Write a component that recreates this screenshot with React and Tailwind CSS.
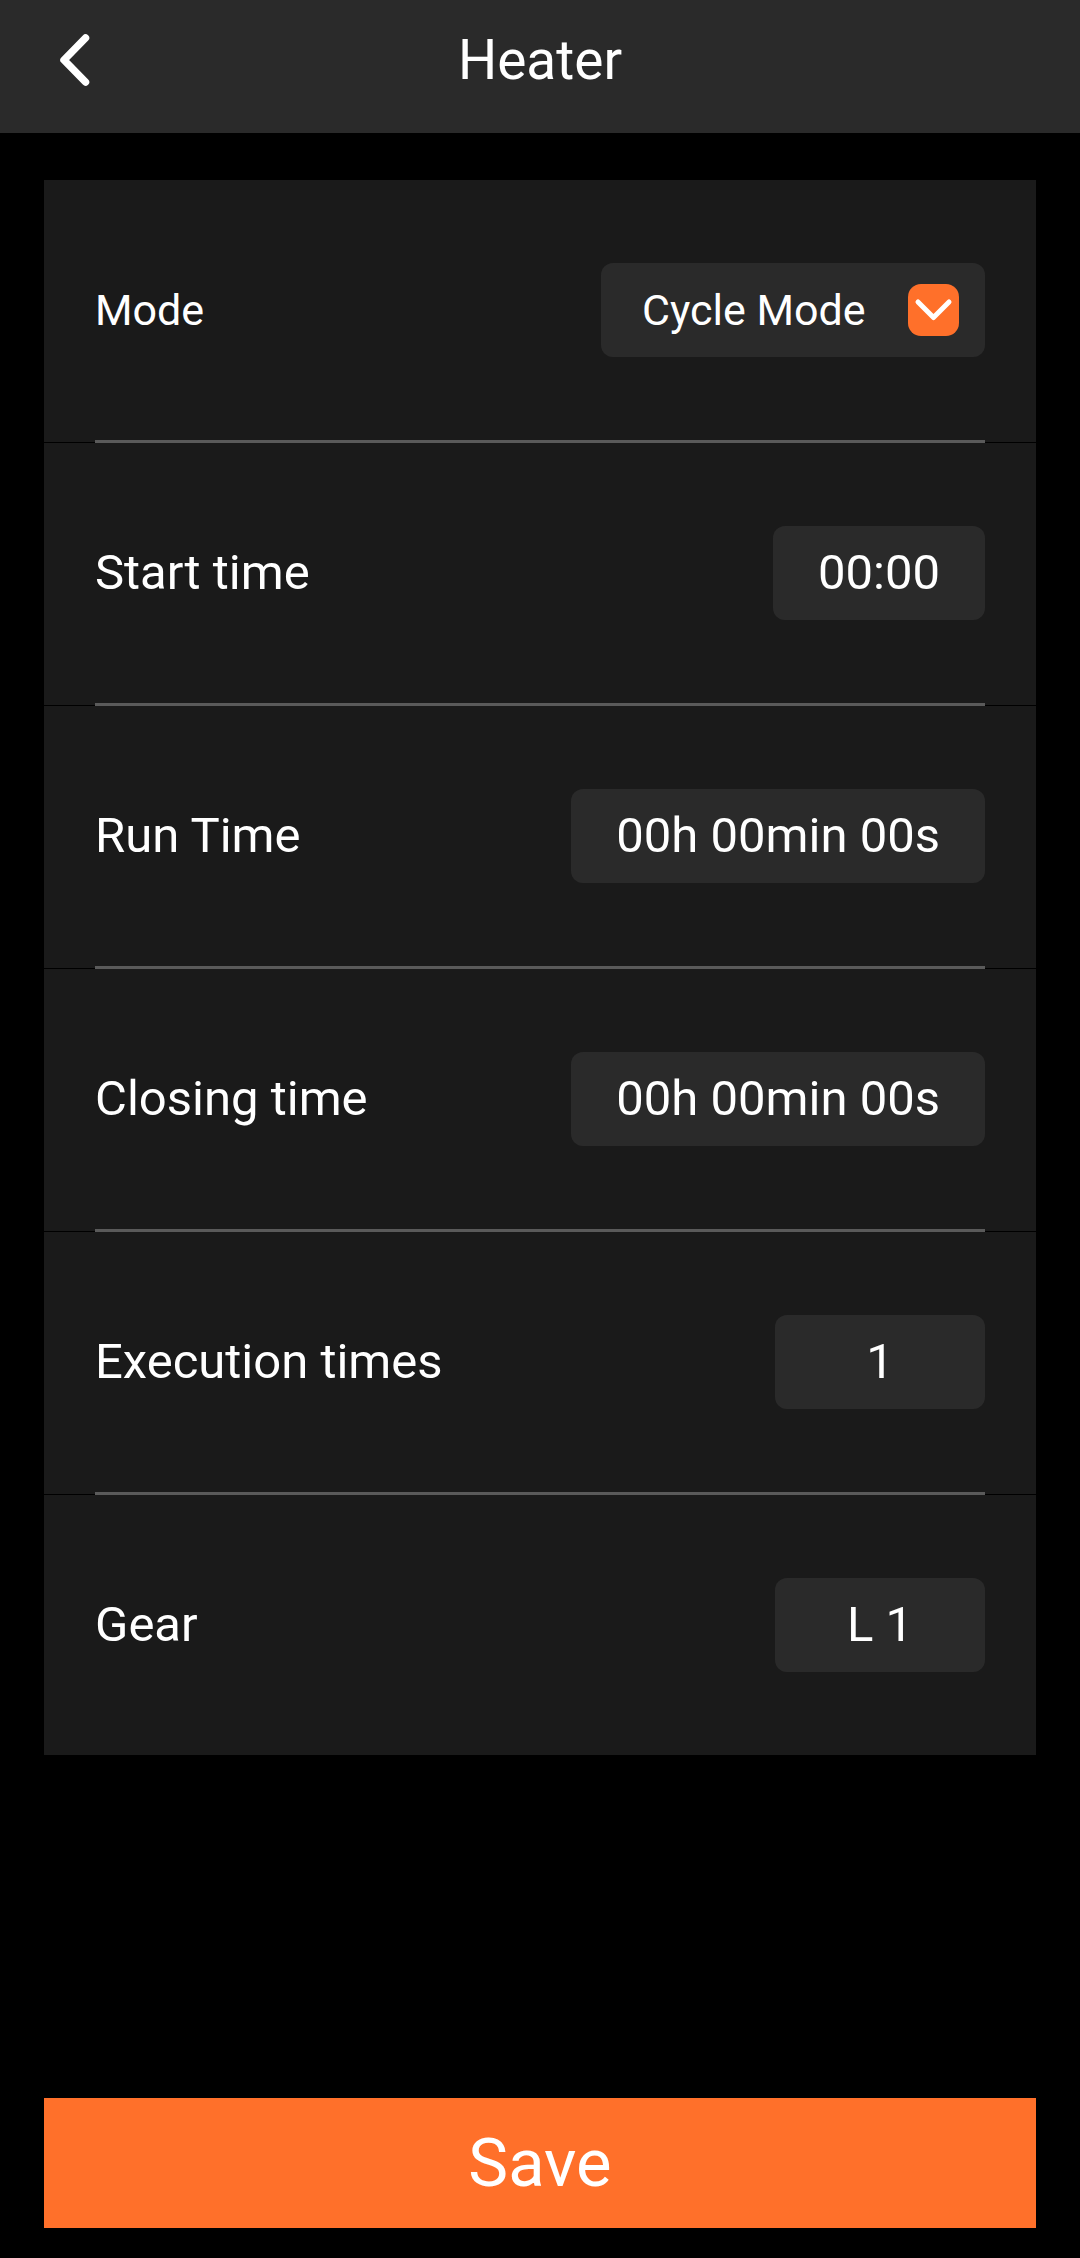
import React, { useState } from 'react';

const ROWS = [
    { id: 'start', label: 'Start time', value: '00:00' },
    { id: 'run', label: 'Run Time', value: '00h 00min 00s' },
    { id: 'closing', label: 'Closing time', value: '00h 00min 00s' },
    { id: 'times', label: 'Execution times', value: '1' },
    { id: 'gear', label: 'Gear', value: 'L 1' },
];

function Header({ title }) {
    return (
        <header className="grid grid-cols-[1fr_auto_1fr] items-center h-[133px] px-10 pb-[13px] bg-[#2a2a2a]">
            <button type="button" aria-label="Back" className="justify-self-start w-[70px] h-[70px] flex items-center justify-center">
                <svg width="50" height="60" viewBox="0 0 50 60" fill="none" stroke="currentColor" strokeWidth="7.5" strokeLinecap="round" strokeLinejoin="round">
                    <path d="M35.5 8 14 30l21.5 22" />
                </svg>
            </button>
            <h1 className="text-[55px] leading-[64px]">{title}</h1>
        </header>
    );
}

function Divider() {
    return (
        <div className="h-[3px] px-[51px] border-b border-black" aria-hidden="true">
            <div className="h-[3px] bg-[#5a5a5a]" />
        </div>
    );
}

function Row({ children }) {
    return (
        <div className="h-[260px] px-[51px] flex items-center justify-between gap-6">
            {children}
        </div>
    );
}

function ModeSelect({ id, value, onChange }) {
    return (
        <div className="relative">
            <select
                id={id}
                value={value}
                onChange={(e) => onChange(e.target.value)}
                className="appearance-none h-[94px] pl-[41px] pr-[119px] rounded-[12px] bg-[#2a2a2a] text-[43px] cursor-pointer outline-none"
            >
                <option value="cycle">Cycle Mode</option>
            </select>
            <span className="absolute right-[26px] top-[21px] w-[51px] h-[52px] rounded-[13px] bg-[#ff702a] pointer-events-none">
                <svg width="51" height="52" viewBox="0 0 51 52" fill="none" stroke="white" strokeWidth="5" strokeLinecap="round" strokeLinejoin="round">
                    <path d="M10 18l15.5 15.5L41 18" />
                </svg>
            </span>
        </div>
    );
}

export default function App() {
    const [mode, setMode] = useState('cycle');

    return (
        <div className="min-h-screen flex flex-col bg-black text-white font-['Roboto',sans-serif]">
            <Header title="Heater" />

            <main className="flex-1 flex flex-col px-11 pt-[47px] pb-[30px]">
                <section className="bg-[#1a1a1a]">
                    <Row>
                        <label htmlFor="mode" className="text-[43px]">Mode</label>
                        <ModeSelect id="mode" value={mode} onChange={setMode} />
                    </Row>
                    {ROWS.map(row => (
                        <React.Fragment key={row.id}>
                            <Divider />
                            <Row>
                                <span id={row.id} className="text-[49px]">{row.label}</span>
                                <button
                                    type="button"
                                    aria-labelledby={`${row.id} ${row.id}-value`}
                                    className="h-[94px] min-w-[210px] px-[45px] rounded-[12px] bg-[#2a2a2a] text-[49px]"
                                >
                                    <span id={`${row.id}-value`}>{row.value}</span>
                                </button>
                            </Row>
                        </React.Fragment>
                    ))}
                </section>

                <button type="button" className="mt-auto h-[130px] w-full bg-[#ff702a] text-[67px]">
                    Save
                </button>
            </main>
        </div>
    );
}
